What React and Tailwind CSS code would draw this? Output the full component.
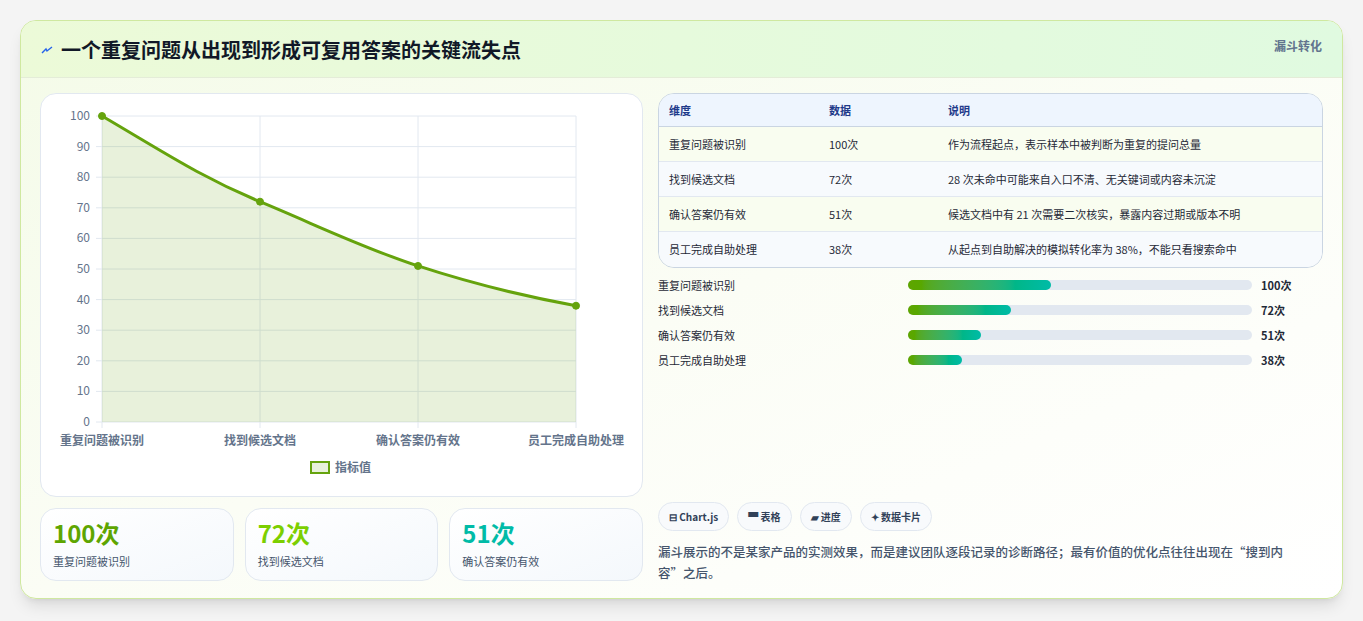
const ROWS = [
  { name: '重复问题被识别', value: 100, note: '作为流程起点，表示样本中被判断为重复的提问总量', bar: 143 },
  { name: '找到候选文档', value: 72, note: '28 次未命中可能来自入口不清、无关键词或内容未沉淀', bar: 103 },
  { name: '确认答案仍有效', value: 51, note: '候选文档中有 21 次需要二次核实，暴露内容过期或版本不明', bar: 73 },
  { name: '员工完成自助处理', value: 38, note: '从起点到自助解决的模拟转化率为 38%，不能只看搜索命中', bar: 54 },
];

function Chart() {
  const x0 = 61, x1 = 535, y0 = 22, y1 = 328;
  const xs = [0, 1, 2, 3].map((i) => x0 + ((x1 - x0) * i) / 3);
  const yOf = (v) => y1 - ((y1 - y0) * v) / 100;
  const pts = ROWS.map((r, i) => [xs[i], yOf(r.value)]);
  const line = `M${pts[0][0]},${pts[0][1]} C${pts[0][0] + 60},${pts[0][1] + 35} ${pts[1][0] - 60},${pts[1][1] - 25} ${pts[1][0]},${pts[1][1]} S${pts[2][0] - 55},${pts[2][1] - 18} ${pts[2][0]},${pts[2][1]} S${pts[3][0] - 55},${pts[3][1] - 10} ${pts[3][0]},${pts[3][1]}`;
  return (
    <svg width="600" height="400" className="block">
      {[0, 10, 20, 30, 40, 50, 60, 70, 80, 90, 100].map((v) => (
        <g key={v}>
          <line x1={x0 - 6} x2={x1} y1={yOf(v)} y2={yOf(v)} stroke="#e2e8f0" />
          <text x={x0 - 12} y={yOf(v) + 4} textAnchor="end" fontSize="12" fill="#64748b">{v}</text>
        </g>
      ))}
      {xs.map((x, i) => (
        <g key={i}>
          <line x1={x} x2={x} y1={y0} y2={y1 + 6} stroke="#e2e8f0" />
          <text x={x} y={y1 + 23} textAnchor="middle" fontSize="12" fontWeight="600" fill="#64748b">{ROWS[i].name}</text>
        </g>
      ))}
      <path d={`${line} L${x1},${y1} L${x0},${y1} Z`} fill="rgba(101,163,13,0.15)" />
      <path d={line} fill="none" stroke="#65a30d" strokeWidth="3" />
      {pts.map(([x, y], i) => (
        <circle key={i} cx={x} cy={y} r="3.5" fill="#65a30d" stroke="#65a30d" />
      ))}
      <rect x="270" y="368" width="18" height="11" fill="rgba(101,163,13,0.15)" stroke="#65a30d" strokeWidth="2" />
      <text x="294" y="378" fontSize="12" fontWeight="600" fill="#64748b">指标值</text>
    </svg>
  );
}

export default function App() {
  return (
    <div className="w-[1363px] h-[621px] bg-[#f4f4f4] pt-5 px-5" style={{ fontFamily: '"Noto Sans CJK SC", "Noto Sans", sans-serif' }}>
      <div className="h-[579px] rounded-2xl border border-[#cfe8a0] bg-gradient-to-br from-[#f4fbe8] via-[#fbfdf5] to-white shadow-lg overflow-hidden">
        <div className="h-[57px] flex items-start justify-between px-5 bg-gradient-to-r from-[#ecfad8] to-[#e0fae0] border-b border-[#e4ecd8]">
          <div className="flex items-center gap-2 mt-[14px]">
            <svg width="12" height="10" viewBox="0 0 12 10"><path d="M1 8 L5 4 L6 6 L11 2" fill="none" stroke="#2563eb" strokeWidth="1.4" /></svg>
            <h1 className="text-[20px] font-bold text-[#111827]">一个重复问题从出现到形成可复用答案的关键流失点</h1>
          </div>
          <span className="mt-[16px] text-[12px] font-bold text-slate-500">漏斗转化</span>
        </div>
        <div className="flex gap-[15px] px-[19px] pt-[15px]">
          <div className="w-[603px] flex flex-col gap-[11px]">
            <div className="h-[404px] rounded-2xl border border-slate-200 bg-white">
              <Chart />
            </div>
            <div className="grid grid-cols-3 gap-[11px]">
              {[['100次', 'text-lime-600'], ['72次', 'text-lime-500'], ['51次', 'text-teal-500']].map(([v, c], i) => (
                <div key={i} className="h-[73px] rounded-2xl border border-slate-200 bg-gradient-to-br from-white to-[#f4f8fc] px-3 pt-2">
                  <div className={`text-[24px] font-bold leading-8 ${c}`}>{v}</div>
                  <div className="text-[11px] text-slate-600 mt-1">{ROWS[i].name}</div>
                </div>
              ))}
            </div>
          </div>
          <div className="flex-1 flex flex-col">
            <div className="rounded-2xl border border-slate-300 overflow-hidden text-[11px]">
              <div className="flex h-[33px] items-center bg-[#eef5fe] border-b border-slate-300 font-bold text-[#1e3a8a]">
                <div className="w-[170px] pl-[10px]">维度</div>
                <div className="w-[119px]">数据</div>
                <div>说明</div>
              </div>
              {ROWS.map((r, i) => (
                <div key={i} className={`flex h-[35px] items-center text-[#1f2937] ${i < 3 ? 'border-b border-slate-200' : ''} ${i % 2 ? 'bg-[#f7fafd]' : 'bg-[#f9fdf0]'}`}>
                  <div className="w-[170px] pl-[10px]">{r.name}</div>
                  <div className="w-[119px]">{r.value}次</div>
                  <div>{r.note}</div>
                </div>
              ))}
            </div>
            <div className="mt-[9px] flex flex-col gap-[9px]">
              {ROWS.map((r, i) => (
                <div key={i} className="flex items-center h-[16px] text-[11px] text-[#1f2937]">
                  <div className="w-[250px]">{r.name}</div>
                  <div className="w-[344px] h-[10px] rounded-full bg-slate-200">
                    <div className="h-full rounded-full bg-gradient-to-r from-lime-600 to-teal-500" style={{ width: r.bar }} />
                  </div>
                  <div className="ml-[9px] font-bold">{r.value}次</div>
                </div>
              ))}
            </div>
            <div className="mt-[134px] flex gap-2">
              {['⊟ Chart.js', '▀ 表格', '▰ 进度', '✦ 数据卡片'].map((t) => (
                <span key={t} className="h-[29px] px-[10px] flex items-center rounded-full border border-slate-200 bg-[#f8fafc] text-[10px] font-bold text-slate-700">{t}</span>
              ))}
            </div>
            <p className="mt-[10px] pr-1 text-[12.5px] leading-[21px] font-medium text-slate-600">漏斗展示的不是某家产品的实测效果，而是建议团队逐段记录的诊断路径；最有价值的优化点往往出现在“搜到内容”之后。</p>
          </div>
        </div>
      </div>
    </div>
  );
}
